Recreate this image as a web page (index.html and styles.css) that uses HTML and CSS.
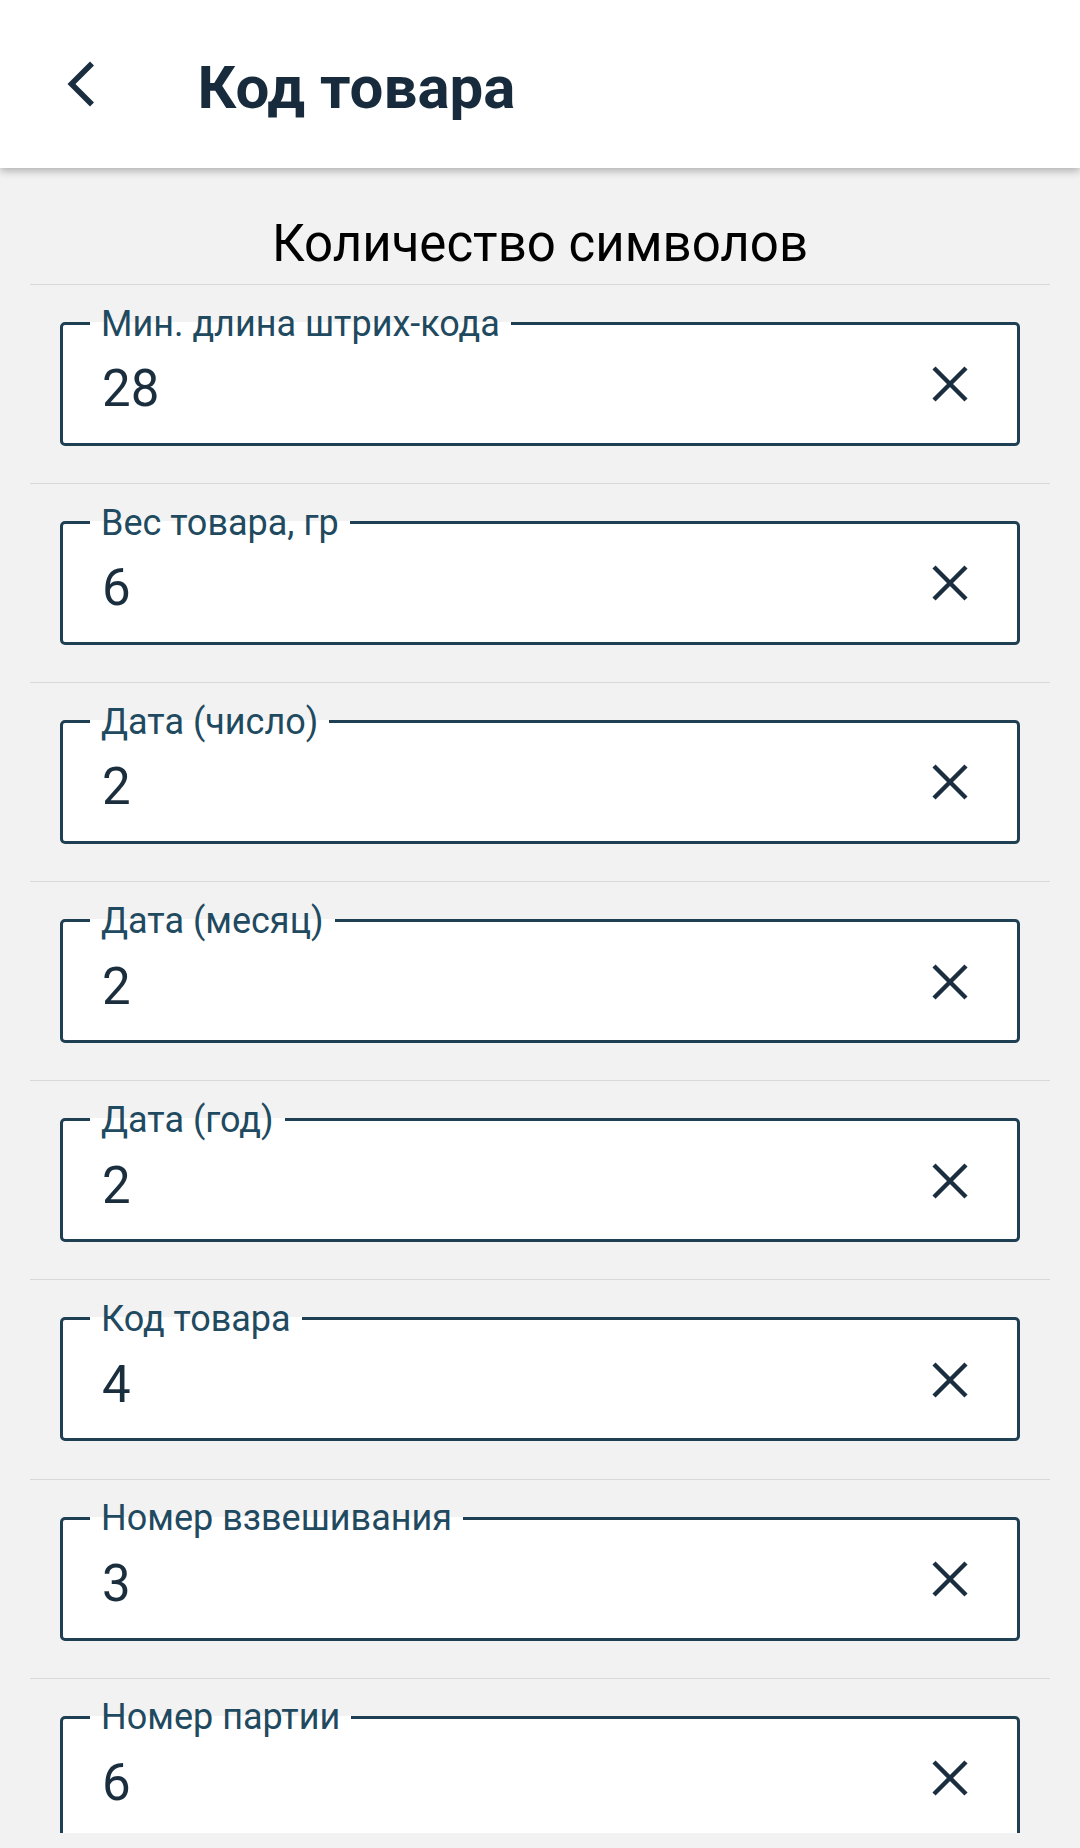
FILE: index.html
```html
<!DOCTYPE html>
<html lang="ru">
<head>
<meta charset="utf-8">
<title>Код товара</title>
<link rel="stylesheet" href="styles.css">
</head>
<body>
<header class="topbar">
  <button class="back" aria-label="Назад">
    <svg viewBox="0 0 24 24" width="54" height="54"><path d="M17.77 3.77 16 2 6 12l10 10 1.77-1.77L9.54 12z" fill="#1a2e40"/></svg>
  </button>
  <h1 class="title">Код товара</h1>
</header>
<main class="content">
  <h2 class="section-title">Количество символов</h2>
  <div class="row">
    <fieldset class="field"><legend>Мин. длина штрих-кода</legend>
      <div class="field-body"><span class="value">28</span><span class="clear"><svg viewBox="0 0 36 36" width="36" height="36"><path d="M2 2 34 34 M34 2 2 34" stroke="#1a2e40" stroke-width="4.4"/></svg></span></div>
    </fieldset>
  </div>
  <div class="row">
    <fieldset class="field"><legend>Вес товара, гр</legend>
      <div class="field-body"><span class="value">6</span><span class="clear"><svg viewBox="0 0 36 36" width="36" height="36"><path d="M2 2 34 34 M34 2 2 34" stroke="#1a2e40" stroke-width="4.4"/></svg></span></div>
    </fieldset>
  </div>
  <div class="row">
    <fieldset class="field"><legend>Дата (число)</legend>
      <div class="field-body"><span class="value">2</span><span class="clear"><svg viewBox="0 0 36 36" width="36" height="36"><path d="M2 2 34 34 M34 2 2 34" stroke="#1a2e40" stroke-width="4.4"/></svg></span></div>
    </fieldset>
  </div>
  <div class="row">
    <fieldset class="field"><legend>Дата (месяц)</legend>
      <div class="field-body"><span class="value">2</span><span class="clear"><svg viewBox="0 0 36 36" width="36" height="36"><path d="M2 2 34 34 M34 2 2 34" stroke="#1a2e40" stroke-width="4.4"/></svg></span></div>
    </fieldset>
  </div>
  <div class="row">
    <fieldset class="field"><legend>Дата (год)</legend>
      <div class="field-body"><span class="value">2</span><span class="clear"><svg viewBox="0 0 36 36" width="36" height="36"><path d="M2 2 34 34 M34 2 2 34" stroke="#1a2e40" stroke-width="4.4"/></svg></span></div>
    </fieldset>
  </div>
  <div class="row">
    <fieldset class="field"><legend>Код товара</legend>
      <div class="field-body"><span class="value">4</span><span class="clear"><svg viewBox="0 0 36 36" width="36" height="36"><path d="M2 2 34 34 M34 2 2 34" stroke="#1a2e40" stroke-width="4.4"/></svg></span></div>
    </fieldset>
  </div>
  <div class="row">
    <fieldset class="field"><legend>Номер взвешивания</legend>
      <div class="field-body"><span class="value">3</span><span class="clear"><svg viewBox="0 0 36 36" width="36" height="36"><path d="M2 2 34 34 M34 2 2 34" stroke="#1a2e40" stroke-width="4.4"/></svg></span></div>
    </fieldset>
  </div>
  <div class="row">
    <fieldset class="field"><legend>Номер партии</legend>
      <div class="field-body"><span class="value">6</span><span class="clear"><svg viewBox="0 0 36 36" width="36" height="36"><path d="M2 2 34 34 M34 2 2 34" stroke="#1a2e40" stroke-width="4.4"/></svg></span></div>
    </fieldset>
  </div>
</main>
</body>
</html>
```

FILE: styles.css
```css
* { box-sizing: border-box; }
html, body {
  margin: 0;
  padding: 0;
}
body {
  width: 1080px;
  height: 1848px;
  overflow: hidden;
  background: #f2f2f2;
  font-family: Roboto, "Noto Sans", "Liberation Sans", sans-serif;
}
.topbar {
  position: relative;
  z-index: 2;
  height: 168px;
  background: #fff;
  display: flex;
  align-items: center;
  box-shadow: 0 3px 8px rgba(0, 0, 0, 0.28);
}
.back {
  margin: 0 0 0 53.5px;
  padding: 0;
  border: 0;
  background: none;
  width: 54px;
  height: 54px;
  display: flex;
}
.title {
  margin: 8px 0 0 90px;
  font-size: 60px;
  font-weight: 700;
  line-height: 68px;
  color: #172b3c;
}
.content {
  height: 1665px;
  overflow: hidden;
  padding: 0 30px;
}
.section-title {
  margin: 0;
  padding: 45.7px 0 10.3px;
  height: 116px;
  text-align: center;
  font-size: 51px;
  line-height: 60px;
  font-weight: 400;
  color: #000;
}
.row {
  border-top: 1px solid #d9d9d9;
  padding: 20.5px 0 37.1px;
}
.field {
  margin: 0 30px 0 30px;
  padding: 0;
  border: 3px solid #1f3f52;
  border-radius: 5px;
  background: #fff;
  min-width: 0;
}
.field legend {
  margin-left: 27px;
  padding: 0 11px;
  font-size: 36px;
  line-height: 36px;
  color: #1f4a5f;
}
.field-body {
  height: 101.5px;
  display: flex;
  align-items: center;
  padding: 0 0 16px 39px;
}
.value {
  flex: 1;
  margin-top: 10px;
  font-size: 51px;
  line-height: 60px;
  color: #1a2e3e;
}
.clear {
  width: 36px;
  height: 36px;
  margin-right: 49px;
  display: flex;
}
```
